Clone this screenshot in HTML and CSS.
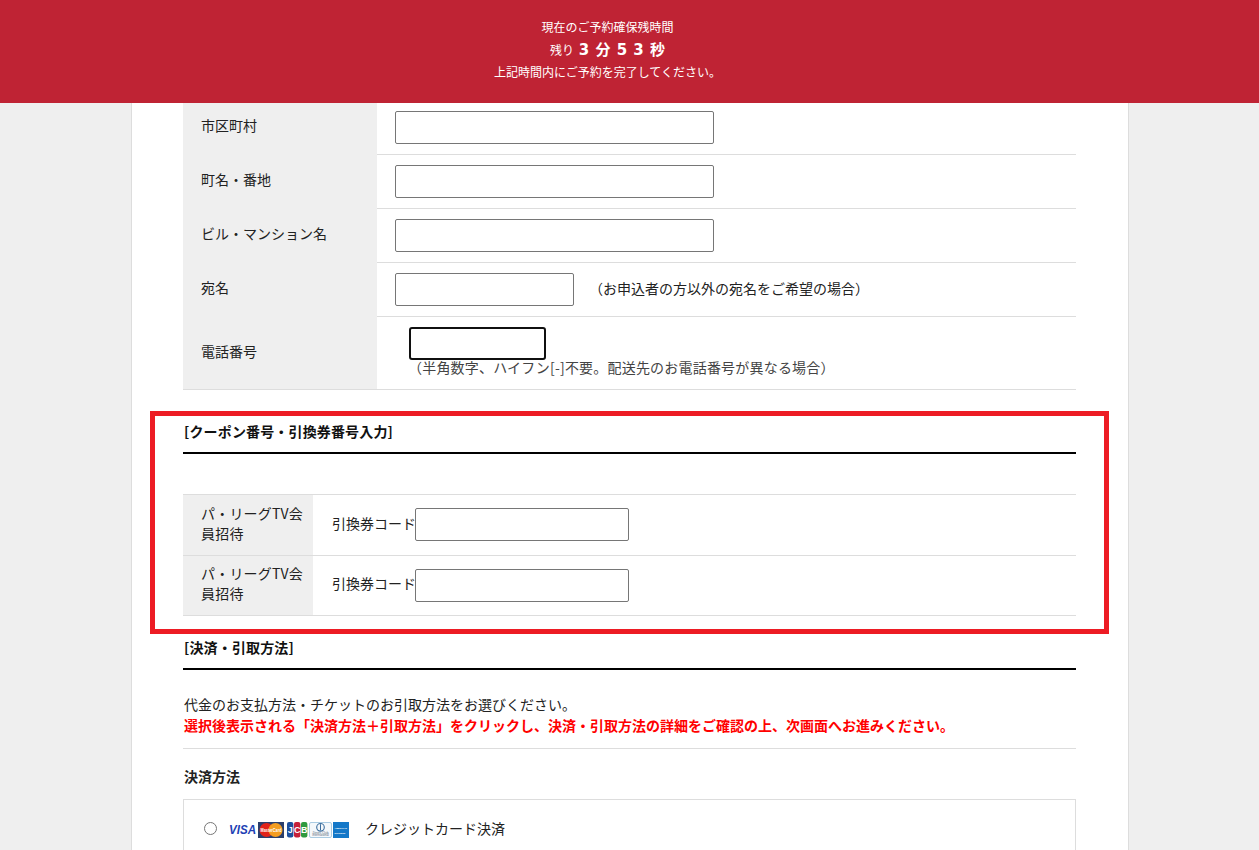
FILE: index.html
```html
<!DOCTYPE html>
<html lang="ja">
<head>
<meta charset="utf-8">
<title>ご予約</title>
<link rel="stylesheet" href="styles.css">
</head>
<body>
<header class="timer">
  <p class="timer-line">現在のご予約確保残時間</p>
  <p class="timer-line timer-count">残り <strong>3 分 5 3 秒</strong></p>
  <p class="timer-line">上記時間内にご予約を完了してください。</p>
</header>
<main class="card">
  <div class="row">
    <div class="label">市区町村</div>
    <div class="field"><input class="input wide" type="text"></div>
  </div>
  <div class="row">
    <div class="label">町名・番地</div>
    <div class="field"><input class="input wide" type="text"></div>
  </div>
  <div class="row">
    <div class="label">ビル・マンション名</div>
    <div class="field"><input class="input wide" type="text"></div>
  </div>
  <div class="row">
    <div class="label">宛名</div>
    <div class="field field-inline"><input class="input mid" type="text"><span class="note">（お申込者の方以外の宛名をご希望の場合）</span></div>
  </div>
  <div class="row row-phone">
    <div class="label">電話番号</div>
    <div class="field field-stack">
      <div class="input phone" role="textbox"></div>
      <span class="note-small">（半角数字、ハイフン[-]不要。配送先のお電話番号が異なる場合）</span>
    </div>
  </div>

  <section class="coupon">
    <h2 class="heading">[クーポン番号・引換券番号入力]</h2>
    <div class="coupon-rows">
      <div class="row coupon-row">
        <div class="label label-narrow">パ・リーグTV会員招待</div>
        <div class="field coupon-field"><span class="code-label">引換券コード</span><input class="input code" type="text"></div>
      </div>
      <div class="row coupon-row">
        <div class="label label-narrow">パ・リーグTV会員招待</div>
        <div class="field coupon-field"><span class="code-label">引換券コード</span><input class="input code" type="text"></div>
      </div>
    </div>
  </section>

  <section class="payment">
    <h2 class="heading">[決済・引取方法]</h2>
    <div class="intro">
      <p>代金のお支払方法・チケットのお引取方法をお選びください。</p>
      <p class="warn">選択後表示される「決済方法＋引取方法」をクリックし、決済・引取方法の詳細をご確認の上、次画面へお進みください。</p>
    </div>
    <h3 class="subheading">決済方法</h3>
    <div class="option">
      <input class="radio" type="radio" name="pay">
      <svg class="brands" width="122" height="18" viewBox="0 0 122 18" aria-hidden="true">
        <text x="0" y="13" class="visa" textLength="27" lengthAdjust="spacingAndGlyphs">VISA</text>
        <rect x="29" y="1" width="26" height="16" fill="#2b3f6c"/>
        <circle cx="37.5" cy="9" r="7" fill="#e2231a"/>
        <circle cx="46.5" cy="9" r="7" fill="#f49d20"/>
        <text x="31.5" y="11" class="mc" textLength="21" lengthAdjust="spacingAndGlyphs">MasterCard</text>
        <rect x="58" y="1" width="6.4" height="15.5" rx="2" fill="#1d4f9c"/>
        <rect x="65" y="1" width="6.4" height="15.5" rx="2" fill="#c6203a"/>
        <rect x="72" y="1" width="6.4" height="15.5" rx="2" fill="#2f9a3f"/>
        <text x="61.2" y="12" class="jcb" text-anchor="middle">J</text>
        <text x="68.2" y="12" class="jcb" text-anchor="middle">C</text>
        <text x="75.2" y="12" class="jcb" text-anchor="middle">B</text>
        <rect x="80.5" y="1.5" width="22" height="15" rx="1.5" fill="#f4f8fb" stroke="#a9cbe2"/>
        <circle cx="91.5" cy="6.3" r="3.8" fill="none" stroke="#3c6e9e" stroke-width="1.1"/>
        <path d="M91.5 3.2v6.2" stroke="#3c6e9e" stroke-width="1"/>
        <text x="91.5" y="12.6" class="dc" text-anchor="middle">Diners Club</text>
        <text x="91.5" y="15.4" class="dc" text-anchor="middle">International</text>
        <rect x="104" y="1" width="16" height="16" fill="#1478c8"/>
        <text x="105.5" y="8" class="ax">AMERICAN</text>
        <text x="105.5" y="12.5" class="ax">EXPRESS</text>
      </svg>
      <span class="option-text">クレジットカード決済</span>
    </div>
  </section>
</main>
</body>
</html>
```

FILE: styles.css
```css
* { box-sizing: border-box; }
html, body { margin: 0; height: 850px; overflow: hidden; }
body {
  padding-left: 1px;
  background: #efefef;
  color: #222;
  font-family: "Noto Sans CJK JP", "Liberation Sans", sans-serif;
  font-size: 14px;
  line-height: 20px;
}
p { margin: 0; }

.timer {
  position: fixed;
  top: 0; left: 0; right: 0;
  z-index: 5;
  height: 103px;
  padding: 16px 44px 0 0;
  background: #bf2334;
  color: #fff;
  text-align: center;
  font-size: 12px;
}
.timer-line { line-height: 22.6px; }
.timer-count strong {
  font-family: "DejaVu Sans", "Noto Sans CJK JP", sans-serif;
  font-size: 15px;
  font-weight: 700;
  line-height: 1;
  margin-left: 2px;
  word-spacing: 1px;
}

.card {
  width: 998px;
  height: 850px;
  margin: 0 auto;
  padding: 101px 52px 0 51px;
  background: #fff;
  border-left: 1px solid #ddd;
  border-right: 1px solid #ddd;
  overflow: hidden;
}
.row {
  display: flex;
  height: 55px;
  margin-top: -1px;
  border-bottom: 1px solid #ddd;
}
.row-phone { height: 74px; }
.label {
  flex: none;
  display: flex;
  align-items: center;
  width: 194px;
  padding: 0 8px 4px 18px;
  background: #efefef;
  line-height: 20px;
}
.label-narrow { width: 130px; letter-spacing: .2px; }
.field { display: flex; align-items: center; padding-left: 18px; flex: 1; }
.field-inline .note { margin: 0 0 2px 15px; }
.field-stack { flex-direction: column; align-items: flex-start; padding: 11px 0 0 32px; }
.note-small { color: #444; margin: -3px 0 0 -1px; line-height: 20px; white-space: nowrap; letter-spacing: .2px; }

.input {
  display: block;
  flex: none;
  height: 33px;
  margin: 0;
  padding: 0;
  border: 1px solid #767676;
  border-radius: 2px;
  background: #fff;
}
.wide { width: 319px; }
.mid { width: 179px; }
.phone { width: 137px; border: 2px solid #101010; border-radius: 3px; }
.code { width: 214px; }

.coupon {
  margin: 21px -33px 0;
  padding: 0 28px;
  height: 223px;
  border: 5px solid #ed1c24;
}
.heading {
  margin: 0;
  height: 38px;
  padding: 5px 0 0 1px;
  border-bottom: 2px solid #000;
  color: #111;
  font-size: 14px;
  font-weight: 700;
  line-height: 20px;
  letter-spacing: .15px;
}
.coupon-rows { padding-top: 40px; }
.coupon-row { height: 61px; margin-top: 0; }
.coupon-row:first-child .input { margin-bottom: 1px; }
.coupon-row + .coupon-row { height: 60px; }
.coupon-row + .coupon-row .label { padding-bottom: 6px; }
.coupon-rows::before {
  content: "";
  display: block;
  border-top: 1px solid #ddd;
}
.coupon-field { white-space: nowrap; padding-left: 19px; }
.code-label { padding-bottom: 4px; margin-right: -1px; }
.coupon-row + .coupon-row .code-label { padding-bottom: 5px; }

.payment .heading { height: 36px; padding-top: 3px; }
.intro {
  margin-top: 24px;
  padding: 0 0 12px 1px;
  border-bottom: 1px solid #ddd;
  line-height: 21px;
}
.warn { color: #f00; font-weight: 700; }
.subheading {
  margin: 17px 0 13px;
  padding-left: 1px;
  color: #222;
  font-size: 14px;
  font-weight: 700;
  line-height: 20px;
}
.option {
  display: flex;
  align-items: center;
  height: 70px;
  padding: 0 20px 11px;
  border: 1px solid #ddd;
}
.radio { width: 13px; height: 13px; margin: 0 12px 0 0; flex: none; }
.brands { flex: none; margin: 3px 15px 0 0; }
.visa {
  fill: #2140b4;
  font-family: "Liberation Sans", sans-serif;
  font-size: 13.5px;
  font-weight: 700;
  font-style: italic;
}
.mc, .jcb, .dc, .ax { font-family: "Liberation Sans", sans-serif; }
.mc { fill: #fff; font-size: 5px; font-weight: 700; }
.jcb { fill: #fff; font-size: 9px; font-weight: 700; }
.dc { fill: #5b6b78; font-size: 3px; }
.ax { fill: #fff; font-size: 2.3px; font-weight: 700; }
.option-text { color: #222; margin-bottom: 2px; margin-left: -1px; }
```
